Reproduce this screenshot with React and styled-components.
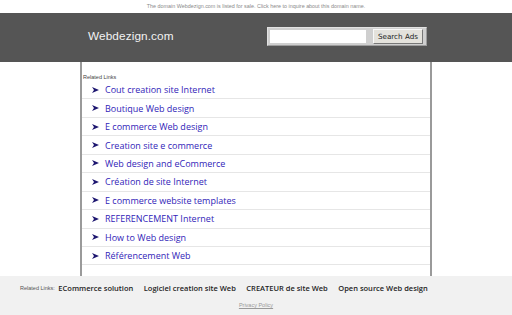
import React from "react";
import styled, { createGlobalStyle } from "styled-components";

const GlobalStyle = createGlobalStyle`
  html, body {
    margin: 0;
    padding: 0;
    background: #ffffff;
  }
  body {
    font-family: "Liberation Sans", Arial, sans-serif;
  }
`;

const Page = styled.div`
  width: 512px;
  min-height: 315px;
  display: flex;
  flex-direction: column;
  overflow: hidden;
`;

const TopNote = styled.div`
  height: 13px;
  line-height: 12px;
  font-size: 5.4px;
  color: #8a8a8a;
  text-align: center;
`;

const Header = styled.div`
  height: 49px;
  background: #555555;
`;

const Container = styled.div`
  width: 352px;
  margin: 0 auto;
  box-sizing: border-box;
`;

const HeaderInner = styled(Container)`
  height: 100%;
  display: flex;
  align-items: center;
  justify-content: space-between;
  padding: 0 5px 3px 8px;
`;

const Logo = styled.div`
  color: #f2f2f2;
  font-size: 11.8px;
  letter-spacing: 0.1px;
`;

const SearchFrame = styled.form`
  display: flex;
  align-items: center;
  gap: 7px;
  margin: 0;
  padding: 1px 3px 1px 2px;
  background: #cfcfcf;
  border: 1px solid #e2e2e2;
  border-bottom-color: #9c9c9c;
  border-right-color: #9c9c9c;
`;

const SearchInput = styled.input`
  width: 96px;
  height: 13px;
  padding: 0;
  border: none;
  background: #ffffff;
  outline: none;
`;

const SearchButton = styled.button`
  height: 15px;
  padding: 0 4px;
  font-family: "DejaVu Sans", Verdana, sans-serif;
  font-size: 7.2px;
  color: #222;
  background: #e4e2dc;
  border: 1px solid #f8f8f8;
  border-right-color: #777;
  border-bottom-color: #777;
`;

const Content = styled(Container)`
  height: 214px;
  border-left: 2px solid #9a9a9a;
  border-right: 2px solid #9a9a9a;
  padding: 11px 0 0 0;
`;

const SmallLabel = styled.div`
  font-size: 5.5px;
  color: #444;
  padding-left: 1px;
  height: 8px;
  line-height: 8px;
`;

const LinkList = styled.ul`
  list-style: none;
  margin: 0;
  padding: 0;
`;

const LinkRow = styled.li`
  height: 17.45px;
  display: flex;
  align-items: center;
  border-bottom: 1px solid #e6e6e6;
  font-family: "Open Sans", sans-serif;
  font-size: 9px;
  color: #3124b8;
  padding-left: 10px;
  gap: 6px;
`;

const Arrow = styled.span`
  display: flex;
  width: 7px;
  color: #1d1670;
`;

const Footer = styled.div`
  flex: 1;
  background: #f1f1f1;
  padding-top: 6px;
`;

const FooterLinks = styled.div`
  display: flex;
  align-items: center;
  padding-left: 20px;
  height: 12px;
  gap: 10.5px;
`;

const FooterLabel = styled.span`
  font-size: 5.5px;
  color: #555;
  margin-right: -7px;
`;

const FooterLink = styled.span`
  font-family: "Open Sans", sans-serif;
  font-weight: 600;
  font-size: 7.5px;
  color: #1e1e1e;
`;

const Privacy = styled.div`
  text-align: center;
  margin-top: 8px;
  font-size: 5.5px;
  color: #999;
  text-decoration: underline;
`;

const links = [
  "Cout creation site Internet",
  "Boutique Web design",
  "E commerce Web design",
  "Creation site e commerce",
  "Web design and eCommerce",
  "Création de site Internet",
  "E commerce website templates",
  "REFERENCEMENT Internet",
  "How to Web design",
  "Référencement Web",
];

const footerLinks = [
  "ECommerce solution",
  "Logiciel creation site Web",
  "CREATEUR de site Web",
  "Open source Web design",
];

function ArrowIcon() {
  return (
    <svg width="7" height="6" viewBox="0 0 7 6">
      <path d="M0 0 L7 3 L0 6 L2 3 Z" fill="currentColor" />
    </svg>
  );
}

export default function App() {
  return (
    <Page>
      <GlobalStyle />
      <TopNote>
        The domain Webdezign.com is listed for sale. Click here to inquire about
        this domain name.
      </TopNote>
      <Header>
        <HeaderInner>
          <Logo>Webdezign.com</Logo>
          <SearchFrame onSubmit={(e) => e.preventDefault()}>
            <SearchInput type="text" />
            <SearchButton type="submit">Search Ads</SearchButton>
          </SearchFrame>
        </HeaderInner>
      </Header>
      <Content>
        <SmallLabel>Related Links</SmallLabel>
        <LinkList>
          {links.map((l) => (
            <LinkRow key={l}>
              <Arrow>
                <ArrowIcon />
              </Arrow>
              {l}
            </LinkRow>
          ))}
        </LinkList>
      </Content>
      <Footer>
        <FooterLinks>
          <FooterLabel>Related Links:</FooterLabel>
          {footerLinks.map((l) => (
            <FooterLink key={l}>{l}</FooterLink>
          ))}
        </FooterLinks>
        <Privacy>Privacy Policy</Privacy>
      </Footer>
    </Page>
  );
}
